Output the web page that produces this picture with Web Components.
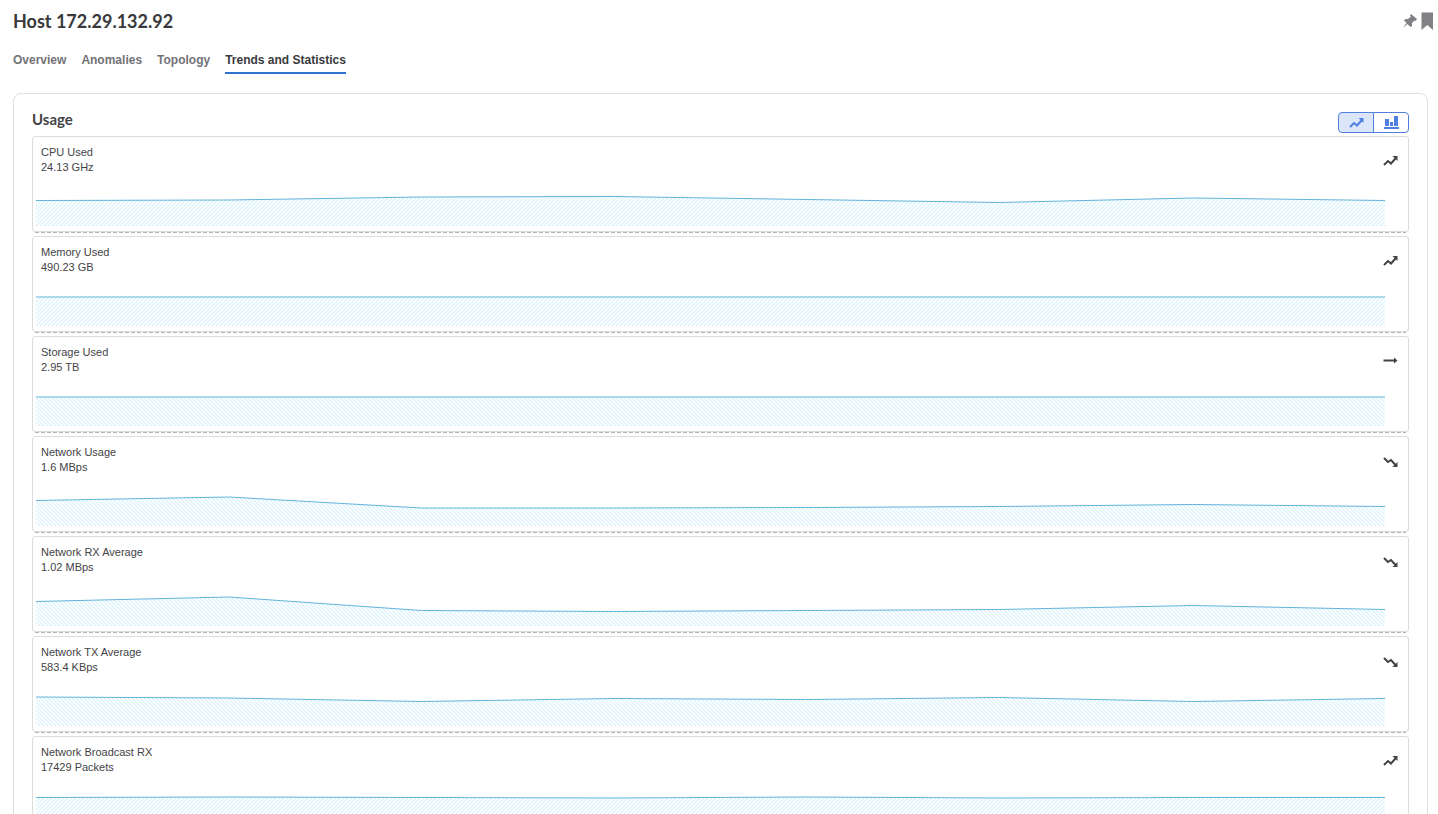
<!DOCTYPE html>
<html lang="en">
<head>
<meta charset="utf-8">
<title>Host 172.29.132.92</title>
<style>
html { scrollbar-width: none; }
body { margin: 0; background: #fff; color: #3c3c3f; font-family: "Liberation Sans", Arial, sans-serif; }
</style>
</head>
<body>
<host-page></host-page>

<template id="host-page">
<style>
:host { display: block; padding: 9px 10px 20px 13px; }
header { display: flex; align-items: center; justify-content: space-between; height: 24px; margin-right: -6px; }
h1 { margin: 0; font: 700 18px/24px Lato, sans-serif; color: #39393c; }
.actions { display: flex; gap: 3px; }
.actions button { display: flex; padding: 0; border: 0; background: none; color: #808085; }
</style>
<header>
  <h1>Host 172.29.132.92</h1>
  <div class="actions">
    <button aria-label="Pin"><ui-icon name="pin"></ui-icon></button>
    <button aria-label="Bookmark"><ui-icon name="bookmark"></ui-icon></button>
  </div>
</header>
<tab-bar>
  <tab-link>Overview</tab-link>
  <tab-link>Anomalies</tab-link>
  <tab-link>Topology</tab-link>
  <tab-link active>Trends and Statistics</tab-link>
</tab-bar>
<usage-panel>
  <span slot="title">Usage</span>
  <metric-card label="CPU Used" value="24.13 GHz" trend="up" points="10.5,10,7,6.5,9.5,12.5,8,10.5"></metric-card>
  <metric-card label="Memory Used" value="490.23 GB" trend="up" points="7,7,7,7,7,7,7,7"></metric-card>
  <metric-card label="Storage Used" value="2.95 TB" trend="flat" points="7,7,7,7,7,7,7,7"></metric-card>
  <metric-card label="Network Usage" value="1.6 MBps" trend="down" points="10.5,7,18,18,17.5,16.5,14.5,16.5"></metric-card>
  <metric-card label="Network RX Average" value="1.02 MBps" trend="down" points="11.5,7,20.5,21.5,20.5,19.5,15.5,19.5"></metric-card>
  <metric-card label="Network TX Average" value="583.4 KBps" trend="down" points="7,8,11.5,8.5,9.5,7.5,11.5,8.5"></metric-card>
  <metric-card label="Network Broadcast RX" value="17429 Packets" trend="up" points="7.5,7,7.5,8,7,8,7.5,7.5"></metric-card>
</usage-panel>
</template>

<template id="tab-bar">
<style>:host { display: flex; gap: 15px; margin-top: 17px; }</style>
<slot></slot>
</template>

<template id="tab-link">
<style>
:host { display: block; }
a { display: block; height: 22px; border-bottom: 2px solid transparent; color: #737377; font: bold 12px/20px "Liberation Sans", Arial, sans-serif; text-decoration: none; }
:host([active]) a { color: #39393c; border-color: #2c73d2; }
</style>
<a href="#"><slot></slot></a>
</template>

<template id="usage-panel">
<style>
:host { display: block; margin-top: 19px; padding: 18px 18px 20px; border: 1px solid #dedede; border-radius: 8px; }
.head { display: flex; justify-content: space-between; height: 24px; }
h2 { margin: 0; font: 700 15px/15px Lato, sans-serif; color: #434346; }
.toggle { display: flex; }
.toggle button { box-sizing: border-box; display: flex; align-items: center; justify-content: center; width: 36px; height: 21px; padding: 0; border: 1px solid #4f80dc; border-radius: 4px 0 0 4px; background: #dbe6fb; color: #4f80e0; }
.toggle button + button { margin-left: -1px; border-radius: 0 4px 4px 0; background: #fff; }
</style>
<div class="head">
  <h2><slot name="title"></slot></h2>
  <div class="toggle" role="group" aria-label="Chart type">
    <button aria-label="Line chart" aria-pressed="true"><ui-icon name="up"></ui-icon></button>
    <button aria-label="Bar chart" aria-pressed="false"><ui-icon name="bars"></ui-icon></button>
  </div>
</div>
<slot></slot>
</template>

<template id="metric-card">
<style>
:host { display: block; height: 100px; }
.card { box-sizing: border-box; height: 96px; padding: 8px 8px 5px; border: 1px solid #dcdcdc; border-radius: 3px; display: flex; flex-direction: column; justify-content: space-between; }
.top { display: flex; justify-content: space-between; font-size: 11px; line-height: 15px; color: #434346; }
.top ui-icon { margin: 10px 2px 0 0; color: #434346; }
:host([trend="down"]) .top ui-icon { margin-top: 12px; }
p { margin: 0; }
svg { display: block; height: 36px; width: calc(100% - 10px); margin-left: -5px; }
.rule { height: 1px; margin: 0 3px; background: repeating-linear-gradient(90deg, #b4b4b4 0 4px, transparent 4px 6px); }
</style>
<div class="card">
  <div class="top"><div><p class="label"></p><p class="value"></p></div><ui-icon></ui-icon></div>
  <svg viewBox="0 0 1349 36" preserveAspectRatio="none" aria-hidden="true">
    <defs><pattern id="hatch" width="4" height="4" patternUnits="userSpaceOnUse">
      <rect width="4" height="4" fill="#f8fdff"/>
      <path d="M-1 1L1 -1M0 4L4 0M3 5L5 3" stroke="#d4eef8" stroke-width="1"/>
    </pattern></defs>
    <path class="area" fill="url(#hatch)"/>
    <path class="line" fill="none" stroke="#63b3da" stroke-width="1" vector-effect="non-scaling-stroke"/>
  </svg>
</div>
<div class="rule"></div>
</template>

<script>
class Base extends HTMLElement {
  constructor() {
    super();
    const template = document.getElementById(this.localName);
    this.attachShadow({ mode: "open" }).append(template.content.cloneNode(true));
  }
}

const ICONS = {
  up: [15, 11, '<path d="M1 10L5 6L8 8.500L12.500 3.500" fill="none" stroke="currentColor" stroke-width="2"/><path d="M9.500 1H14.500V6Z" fill="currentColor"/>'],
  down: [15, 11, '<path d="M1 1L5 5L8 3L12.500 8" fill="none" stroke="currentColor" stroke-width="2"/><path d="M14.500 5V10H9.500Z" fill="currentColor"/>'],
  flat: [15, 11, '<path d="M0.500 5.500H12" fill="none" stroke="currentColor" stroke-width="2"/><path d="M11 2.500L14.500 5.500L11 8.500Z" fill="currentColor"/>'],
  bars: [15, 13, '<path d="M1 3H5V10H1ZM6 6H9V10H6ZM10 0H14V10H10ZM0 11H15V13H0Z" fill="currentColor"/>'],
  pin: [16, 18, '<path d="M9 2L15 7L13.500 9L12.500 8.500L10 11L10 14L8.500 15L5.500 12L1 16L4.500 11L2 8.500L3.500 7H6L9 4.500L8 3.500Z" fill="currentColor"/>'],
  bookmark: [13, 18, '<path d="M0.500 0.500H12V18L6.300 13L0.500 18Z" fill="currentColor"/>']
};
class UiIcon extends HTMLElement {
  static observedAttributes = ["name"];
  constructor() { super(); this.attachShadow({ mode: "open" }); }
  attributeChangedCallback() {
    const icon = ICONS[this.getAttribute("name")];
    if (!icon) return;
    const [w, h, body] = icon;
    this.shadowRoot.innerHTML = `<style>:host{display:block;flex:none}svg{display:block}</style><svg width="${w}" height="${h}" viewBox="0 0 ${w} ${h}" aria-hidden="true">${body}</svg>`;
  }
}

class MetricCard extends Base {
  connectedCallback() {
    const root = this.shadowRoot;
    const trend = this.getAttribute("trend");
    root.querySelector(".label").textContent = this.getAttribute("label");
    root.querySelector(".value").textContent = this.getAttribute("value");
    root.querySelector("ui-icon").setAttribute("name", trend);
    const values = this.getAttribute("points").split(",").map(Number);
    const line = "M" + values.map((y, i) => `${(i * 1349 / (values.length - 1)).toFixed(1)} ${y}`).join("L");
    root.querySelector(".line").setAttribute("d", line);
    root.querySelector(".area").setAttribute("d", line + "V36H0Z");
    // Rising metrics are hatched upwards, flat and falling ones downwards.
    if (trend !== "up") root.querySelector("pattern").setAttribute("patternTransform", "scale(-1 1)");
  }
}

customElements.define("ui-icon", UiIcon);
customElements.define("metric-card", MetricCard);
for (const name of ["tab-link", "tab-bar", "usage-panel", "host-page"]) customElements.define(name, class extends Base {});
</script>
</body>
</html>
